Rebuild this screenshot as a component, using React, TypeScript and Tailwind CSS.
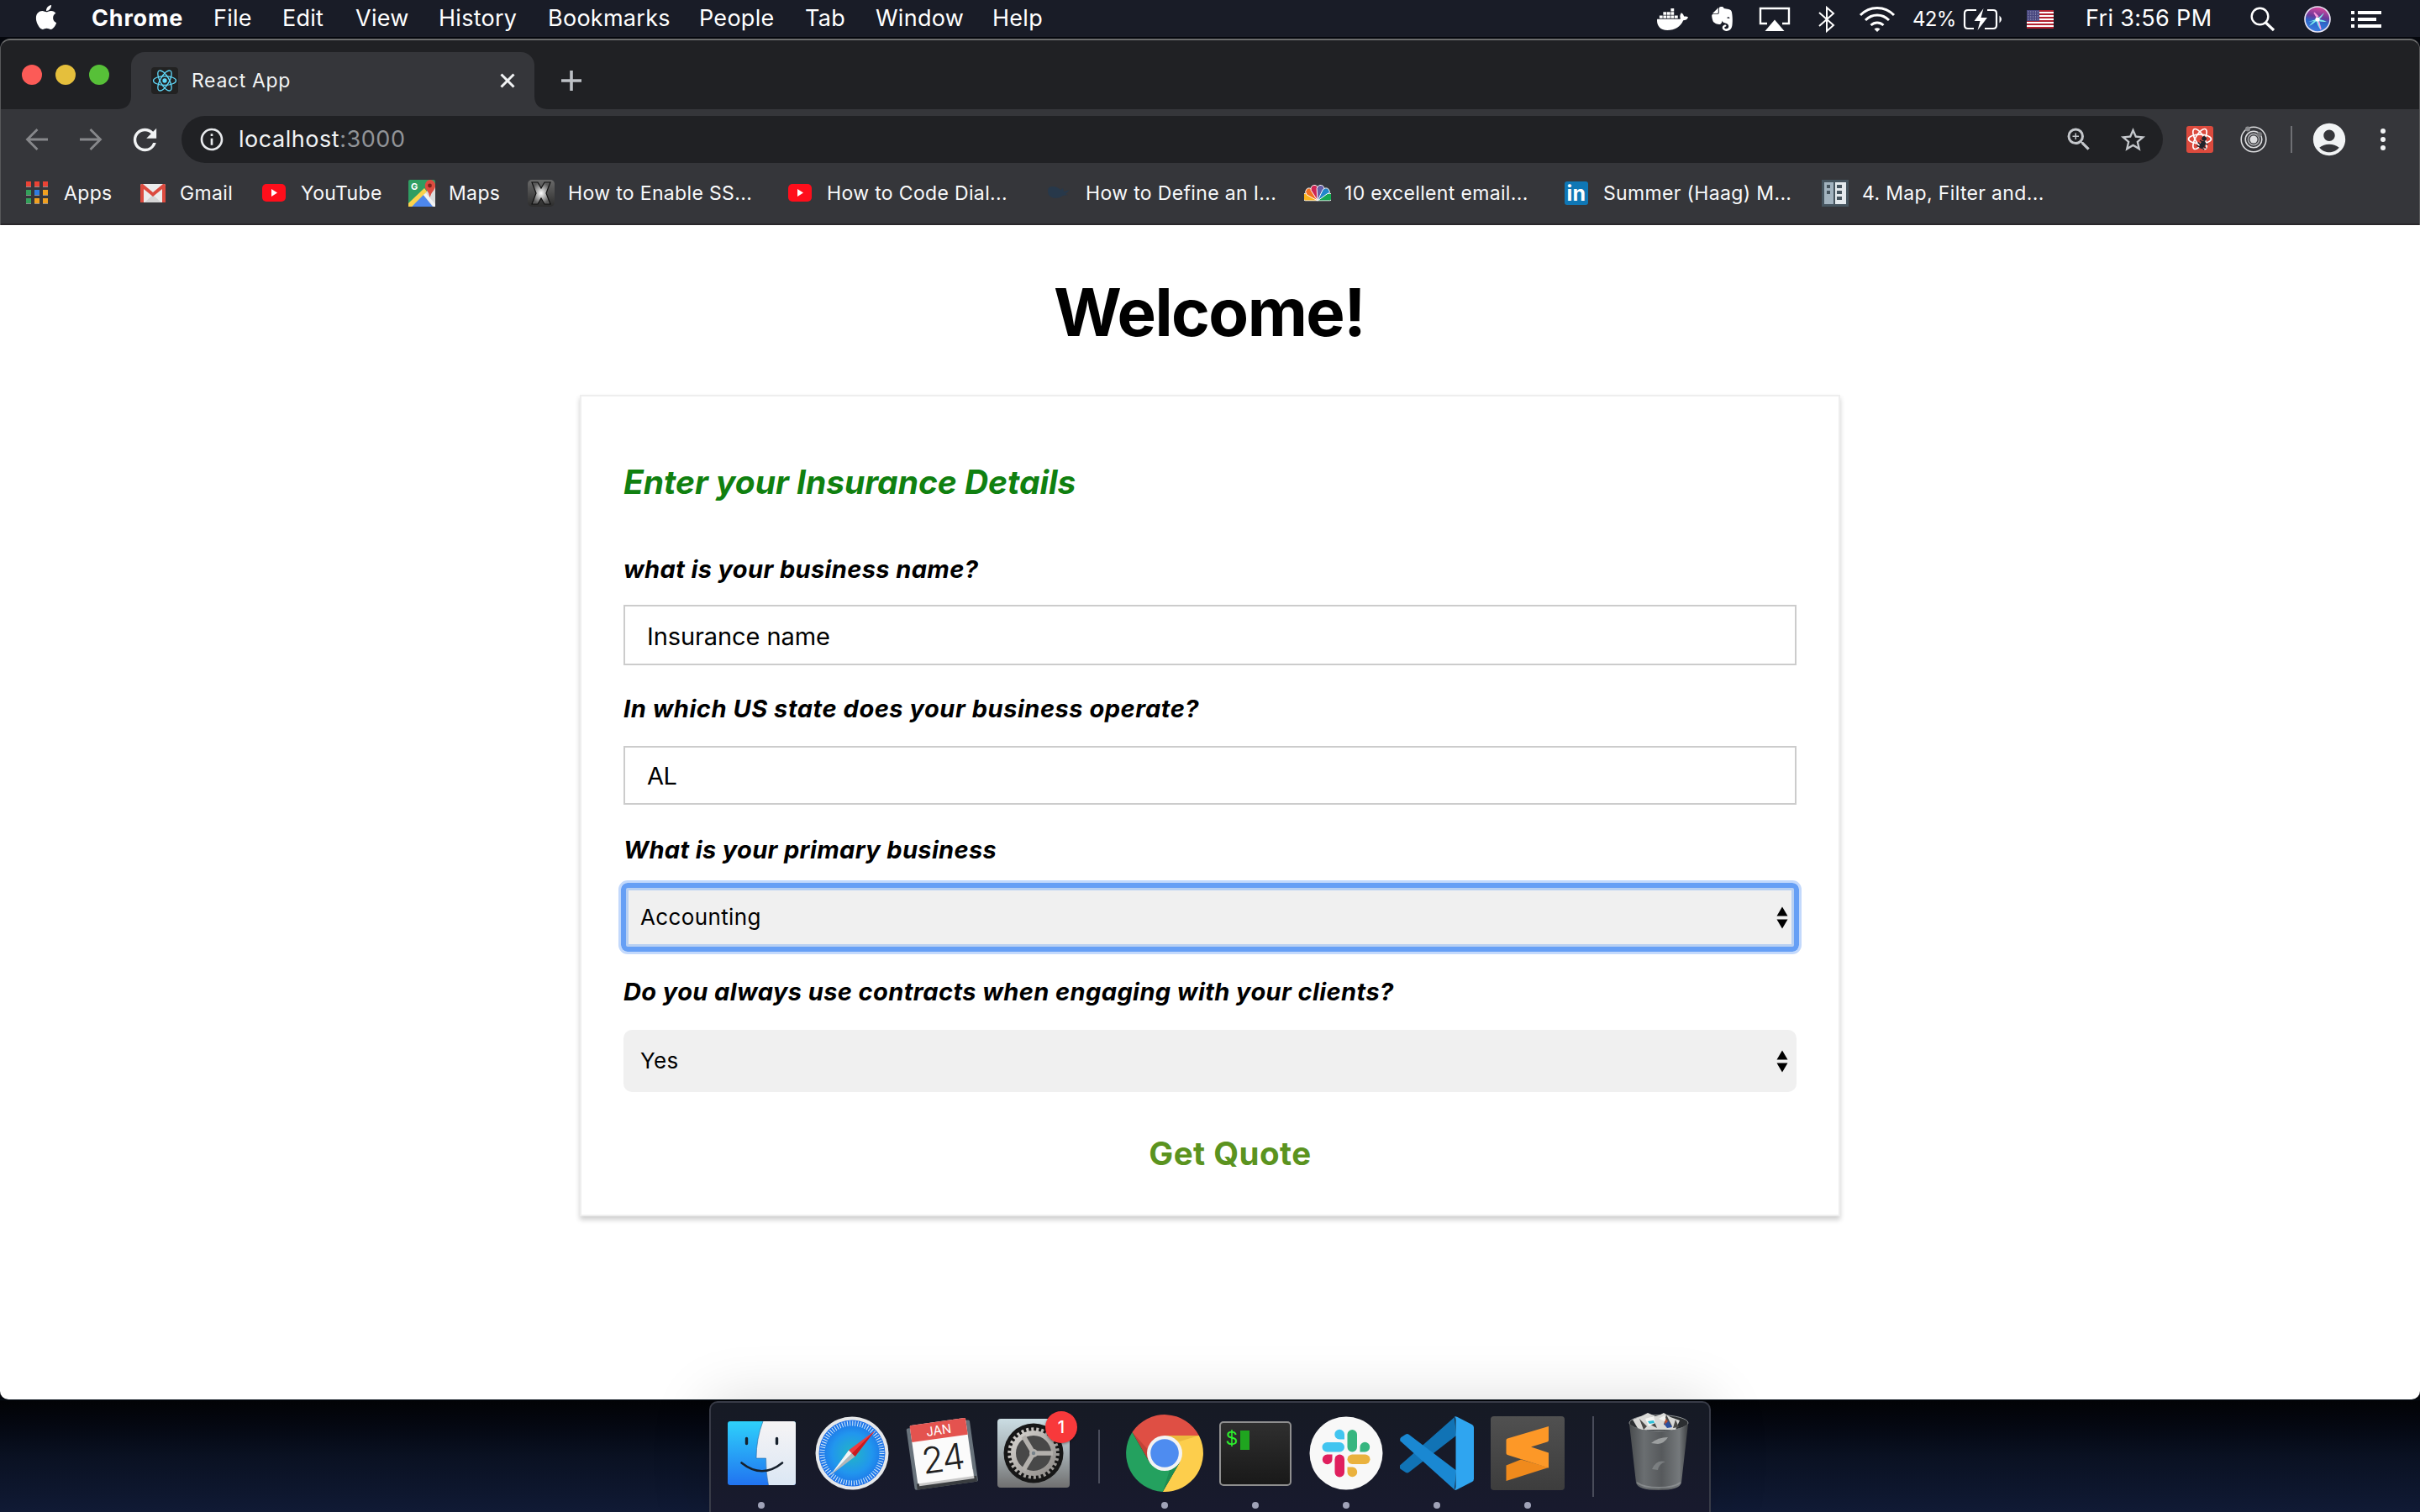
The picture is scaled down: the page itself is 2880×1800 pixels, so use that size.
import React from "react";
import { FaApple, FaDocker, FaEvernote } from "react-icons/fa";
import { MdAccountCircle, MdZoomIn, MdStarBorder, MdRefresh, MdInfoOutline } from "react-icons/md";

/* ---------- menu bar ---------- */

const menuItems = [
  { label: "Chrome", cls: "w-[145px] font-bold tracking-[0.03em]" },
  { label: "File", cls: "w-[82px]" },
  { label: "Edit", cls: "w-[87px]" },
  { label: "View", cls: "w-[99px]" },
  { label: "History", cls: "w-[130px]" },
  { label: "Bookmarks", cls: "w-[180px]" },
  { label: "People", cls: "w-[126px]" },
  { label: "Tab", cls: "w-[84px]" },
  { label: "Window", cls: "w-[139px]" },
  { label: "Help", cls: "w-[70px]" },
];

function StatusIcons() {
  return (
    <div className="flex h-full items-center">
      <FaDocker className="h-[36px] w-[37px]" />
      <FaEvernote className="ml-[24px] h-[33px] w-[33px]" />
      <svg className="ml-[27px] h-[30px] w-[38px]" viewBox="0 0 38 30" fill="none">
        <path d="M10 20H2V2h34v18h-8" stroke="#fff" strokeWidth="2.4" />
        <path d="M19 15.500L30.500 29H7.500z" fill="#fff" />
      </svg>
      <svg className="ml-[33px] h-[32px] w-[20px]" viewBox="0 0 20 32" fill="none" stroke="#fff" strokeWidth="2">
        <path d="M1 8l17 15-8 7V2l8 7L1 24" />
      </svg>
      <svg className="ml-[28px] h-[32px] w-[44px]" viewBox="0 0 44 32" fill="none" stroke="#fff" strokeWidth="3">
        <path d="M2 11C13 -.5 31 -.5 42 11" />
        <path d="M8 17c8-8 20-8 28 0" />
        <path d="M14.500 23c4.500-4 10.500-4 15 0" />
        <path d="M18.500 27.500q3.500-2.500 7 0L22 31z" fill="#fff" stroke="none" />
      </svg>
      <span className="ml-[20px] w-[60px] text-[24px] tracking-[-0.03em]">42%</span>
      <svg className="h-[26px] w-[48px]" viewBox="0 0 48 26" fill="none">
        <path d="M16 2H6Q2 2 2 6v14q0 4 4 4h7M26 24h10q4 0 4-4V6q0-4-4-4h-7" stroke="#fff" strokeWidth="2.2" />
        <path d="M43.500 8.500q5 4.500 0 9z" fill="#fff" />
        <path d="M24.500 0L13.500 15h7l-3 11L29 11h-7.500z" fill="#fff" />
      </svg>
      <svg className="ml-[28px] h-[22px] w-[32px]" viewBox="0 0 32 22">
        <rect width="32" height="22" fill="#fff" />
        {[0, 1, 2, 3, 4, 5].map((i) => (
          <rect key={i} y={i * 4} width="32" height="2" fill="#b22230" />
        ))}
        <rect width="15" height="13" fill="#47467e" />
        {[0, 1, 2, 3].map((r) =>
          [0, 1, 2, 3, 4].map((c) => (
            <rect key={`${r}-${c}`} x={1.5 + c * 2.8} y={1.5 + r * 3} width="1" height="1" fill="#c9c9e0" />
          ))
        )}
      </svg>
      <span className="ml-[38px] w-[196px] text-[27px] tracking-[0.0125em]">Fri 3:56 PM</span>
      <svg className="h-[30px] w-[30px]" viewBox="0 0 30 30" fill="none" stroke="#fff">
        <circle cx="11.500" cy="11.500" r="9.800" strokeWidth="2.400" />
        <path d="M18.500 19L28 28" strokeWidth="3.200" />
      </svg>
      <svg className="ml-[34px] h-[32px] w-[32px]" viewBox="0 0 32 32">
        <defs>
          <linearGradient id="siri" x1="0.600" y1="0" x2="0.400" y2="1">
            <stop offset="0" stopColor="#e0489c" />
            <stop offset="0.400" stopColor="#6b3a9a" />
            <stop offset="0.600" stopColor="#2b66c9" />
            <stop offset="1" stopColor="#3f7ee0" />
          </linearGradient>
        </defs>
        <circle cx="16" cy="16" r="15" fill="url(#siri)" stroke="#e8e4f4" strokeWidth="1.600" />
        <path d="M5 19Q12 17 16 15Q20 12 24 8Q21 14 18 16Q24 17 27 19Q20 19 17 18L20 29Q15 22 15 18Q10 22 6 24Q10 19 12 18z" fill="#7ff0ee" />
        <path d="M16 15L12 8L17 13M17 17l3 11" stroke="#ff9be0" strokeWidth="1.500" />
        <circle cx="16" cy="16" r="2.600" fill="#fff" />
      </svg>
      <svg className="ml-[24px] h-[20px] w-[36px]" viewBox="0 0 36 20" fill="#fff">
        <path d="M0 0h4v4H0zM8 0h28v4H8zM0 8h4v4H0zM8 8h22v4H8zM0 16h4v4H0zM8 16h28v4H8z" />
      </svg>
    </div>
  );
}

function MenuBar() {
  return (
    <header className="flex h-[44px] items-center justify-between bg-[#191c27] pt-px pr-[46px] pl-[41px] text-[27px] text-white">
      <div className="flex h-full items-center tracking-[0.01em]">
        <FaApple className="mt-[-4px] mr-[40px] h-[33px] w-[28px]" />
        {menuItems.map((m) => (
          <span key={m.label} className={m.cls}>
            {m.label}
          </span>
        ))}
      </div>
      <StatusIcons />
    </header>
  );
}

/* ---------- browser chrome ---------- */

function ReactAtom({ className, stroke, width }: { className: string; stroke: string; width: number }) {
  return (
    <svg className={className} viewBox="0 0 32 32" fill="none" stroke={stroke} strokeWidth={width}>
      {[30, 90, 150].map((a) => (
        <ellipse key={a} cx="16" cy="16" rx="13.500" ry="5.300" transform={`rotate(${a - 30} 16 16)`} />
      ))}
      <circle cx="16" cy="16" r="2" fill={stroke} />
    </svg>
  );
}

function TabStrip() {
  return (
    <div className="flex h-[82px] items-end bg-[#202124] pl-[25px]">
      <div className="mb-[29px] flex gap-[16px]">
        <span className="size-[24px] rounded-full bg-[#fc5b57]" />
        <span className="size-[24px] rounded-full bg-[#e5bf3c]" />
        <span className="size-[24px] rounded-full bg-[#57c038]" />
      </div>
      <svg className="ml-[9px] h-[16px] w-[17px]" viewBox="0 0 17 16">
        <path d="M17 0v16H0Q17 16 17 0z" fill="#35363a" />
      </svg>
      <div className="flex h-[68px] w-[480px] items-center rounded-t-[16px] bg-[#35363a] pl-[24px]">
        <span className="size-[32px] rounded-[4px] bg-[#222222]">
          <ReactAtom className="size-[32px]" stroke="#61dafb" width={1.3} />
        </span>
        <span className="ml-[16px] w-[367px] text-[23px] tracking-[0.028em] text-[#f1f3f4]">React App</span>
        <svg className="size-[18px]" viewBox="0 0 18 18" stroke="#f1f3f4" strokeWidth="3">
          <path d="M1.500 1.500l15 15M16.500 1.500l-15 15" />
        </svg>
      </div>
      <svg className="h-[16px] w-[17px]" viewBox="0 0 17 16">
        <path d="M0 0v16h17Q0 16 0 0z" fill="#35363a" />
      </svg>
      <svg className="mb-[22px] ml-[15px] size-[24px]" viewBox="0 0 24 24" stroke="#bdc1c6" strokeWidth="3.600">
        <path d="M12 0v24M0 12h24" />
      </svg>
    </div>
  );
}

function Arrow({ className }: { className: string }) {
  return (
    <svg className={className} viewBox="0 0 28 28" fill="none" stroke="#87888b" strokeWidth="2.800">
      <path d="M27 14H3M14.500 2L2.500 14l12 12" />
    </svg>
  );
}

function Toolbar() {
  return (
    <div className="flex h-[72px] items-center pl-[29px]">
      <Arrow className="h-[28px] w-[28px]" />
      <Arrow className="ml-[36px] h-[28px] w-[28px] rotate-180" />
      <MdRefresh className="ml-[30px] size-[41px] text-[#f1f3f4]" />
      <div className="ml-[23px] flex h-[56px] w-[2358px] items-center rounded-full bg-[#202124] pl-[20px]">
        <MdInfoOutline className="size-[32px] text-[#e8eaed]" />
        <span className="ml-[16px] w-[2172px] text-[27px] tracking-[0.02em] text-[#f1f3f4]">
          localhost<span className="text-[#919498]">:3000</span>
        </span>
        <MdZoomIn className="size-[36px] text-[#c4c7cb]" />
        <MdStarBorder className="ml-[29px] size-[35px] text-[#c4c7cb]" />
      </div>
      <span className="ml-[28px] size-[32px] rounded-[3px] bg-[#dc4a3d]">
        <svg className="size-[32px]" viewBox="0 0 32 32" fill="none" stroke="#fff" strokeWidth="1.700">
          {[0, 60, 120].map((a) => (
            <ellipse key={a} cx="16" cy="15.500" rx="13.500" ry="5.300" transform={`rotate(${a} 16 15.5)`} />
          ))}
          <g transform="rotate(35 20 21)">
            <circle cx="17.500" cy="15.500" r="2.800" fill="#20232a" stroke="none" />
            <ellipse cx="20" cy="22.500" rx="3" ry="5" fill="#20232a" stroke="none" />
            <path d="M14.500 20l11-1M14 23.500h12M15 27l10-1" stroke="#20232a" strokeWidth="1.400" />
          </g>
        </svg>
      </span>
      <svg className="ml-[32px] size-[32px]" viewBox="0 0 32 32" fill="none" stroke="#dcdddf" strokeWidth="1.600">
        <circle cx="16" cy="16" r="14.800" />
        <circle cx="16" cy="16" r="9.800" />
        <circle cx="16" cy="16" r="6.600" stroke="#a9aaad" />
        <circle cx="16" cy="16" r="4.500" fill="#dcdddf" stroke="none" />
        <circle cx="9" cy="3.500" r="3" fill="#8b8c8f" stroke="none" />
        <circle cx="23" cy="10" r="3" fill="#77787b" stroke="none" />
      </svg>
      <span className="ml-[28px] h-[32px] w-[2px] bg-[#6f7074]" />
      <MdAccountCircle className="ml-[21px] size-[46px] text-[#f1f3f4]" />
      <span className="ml-[38px] flex flex-col gap-[4px]">
        <span className="size-[6px] rounded-full bg-[#f1f3f4]" />
        <span className="size-[6px] rounded-full bg-[#f1f3f4]" />
        <span className="size-[6px] rounded-full bg-[#f1f3f4]" />
      </span>
    </div>
  );
}

const appColors = ["#ea4335", "#ea4335", "#ea4335", "#34a05a", "#2f7de1", "#f0a020", "#34a05a", "#f0a020", "#f0a020"];

const AppsIcon = () => (
  <svg className="size-[32px]" viewBox="0 0 32 32">
    {appColors.map((c, i) => (
      <g key={i}>
        <rect x={3 + (i % 3) * 10} y={2 + Math.floor(i / 3) * 10} width="6" height="6" fill={c} />
        <rect x={3 + (i % 3) * 10} y={8 + Math.floor(i / 3) * 10} width="6" height="1" fill="#8d8e91" />
      </g>
    ))}
  </svg>
);

const GmailIcon = () => (
  <svg className="size-[32px]" viewBox="0 0 32 32">
    <rect x="1" y="5" width="30" height="22" rx="2" fill="#ececec" />
    <path d="M6 27L16 18l10 9z" fill="#d5d5d5" />
    <path d="M1 27V7q0-2 2-2h1l12 10L28 5h1q2 0 2 2v20h-4V11L16 20 5 11v16z" fill="#dc4b3f" />
  </svg>
);

const YouTubeIcon = () => (
  <svg className="size-[32px]" viewBox="0 0 32 32">
    <rect x="2" y="5" width="28" height="21" rx="5" fill="#ff0e1b" />
    <path d="M13 11v9l7-4.500z" fill="#fff" />
  </svg>
);

const MapsIcon = () => (
  <svg className="size-[32px]" viewBox="0 0 32 32">
    <rect width="32" height="32" rx="2" fill="#2f9e62" />
    <path d="M32 32V8L16 17 3 32z" fill="#dcdcdc" />
    <path d="M4 32L17 17 29 32z" fill="#4d87ed" />
    <path d="M0 28v4h4L22 14l-3-4z" fill="#fbd34c" />
    <path d="M18 18l3-2 11 13v3h-2z" fill="#f3f3f3" />
    <path d="M25.500 21q-1-6-4-9-3-4-1-8 2-4 5.500-4t5.500 4q1.500 4-1 8-3 3-5 9z" fill="#dc4b3f" />
    <circle cx="25.500" cy="7" r="2.400" fill="#7c231c" />
    <text x="3" y="12" fontFamily="Inter" fontSize="11" fontWeight="700" fill="#fff">G</text>
  </svg>
);

const OsxIcon = () => (
  <svg className="size-[32px]" viewBox="0 0 32 32">
    <defs>
      <linearGradient id="osx" x1="0" y1="0" x2="0" y2="1">
        <stop offset="0" stopColor="#6a6a6a" />
        <stop offset="1" stopColor="#2c2c2c" />
      </linearGradient>
      <radialGradient id="osxGlow">
        <stop offset="0" stopColor="#ffffff" />
        <stop offset="1" stopColor="#5a5a5a" />
      </radialGradient>
    </defs>
    <rect width="32" height="32" rx="5" fill="url(#osx)" />
    <path d="M5 3h7l4 7 4-7h7l-5 13 5 13h-7l-4-7-4 7H5l5-13z" fill="url(#osxGlow)" stroke="#111" strokeWidth="1.200" />
  </svg>
);

const BirdIcon = () => (
  <svg className="size-[32px]" viewBox="0 0 32 32">
    <path d="M3 13q0-5 6-5 5 0 9 4l3-2 1 4 7-2-5 5 3 1-6 1q-4 3-10 3-8-1-8-9z" fill="#27384a" />
  </svg>
);

const nbcColors = ["#f9b31e", "#f26f21", "#cf2553", "#6560a8", "#2186c9", "#15a852"];

const NbcIcon = () => (
  <svg className="size-[32px]" viewBox="0 0 32 32">
    <rect x="3" y="20" width="26" height="5" fill="#fff" />
    {nbcColors.map((c, i) => (
      <path
        key={c}
        d="M16 25L11.500 11Q12 6 16 6t4.500 5z"
        fill={c}
        stroke="#fff"
        strokeWidth="0.900"
        transform={`rotate(${-72 + i * 28.8} 16 25)`}
      />
    ))}
    <rect x="0" y="25.500" width="32" height="7" fill="#35363a" />
  </svg>
);

const LinkedInIcon = () => (
  <span className="flex size-[28px] items-center justify-center rounded-[3px] bg-[#0f77b5] text-[25px] leading-none font-bold text-white">
    in
  </span>
);

const ColumnsIcon = () => (
  <svg className="size-[32px]" viewBox="0 0 32 32">
    <rect width="32" height="32" fill="#46555f" />
    <rect x="3" y="3" width="11" height="26" fill="#a2b3bf" />
    <rect x="16" y="3" width="13" height="26" fill="#e4eaee" />
    <path d="M6 6h4v4H6zM6 13h4v4H6zM18 6h6v4h-6zM18 13h6v4h-6zM18 20h6v4h-6z" fill="#46555f" />
  </svg>
);

const bookmarks = [
  { label: "Apps", icon: <AppsIcon />, cls: "w-[138px]" },
  { label: "Gmail", icon: <GmailIcon />, cls: "w-[144px]" },
  { label: "YouTube", icon: <YouTubeIcon />, cls: "w-[176px]" },
  { label: "Maps", icon: <MapsIcon />, cls: "w-[142px]" },
  { label: "How to Enable SS...", icon: <OsxIcon />, cls: "w-[308px]" },
  { label: "How to Code Dial...", icon: <YouTubeIcon />, cls: "w-[308px]" },
  { label: "How to Define an I...", icon: <BirdIcon />, cls: "w-[308px]" },
  { label: "10 excellent email...", icon: <NbcIcon />, cls: "w-[308px]" },
  { label: "Summer (Haag) M...", icon: <LinkedInIcon />, cls: "w-[308px]" },
  { label: "4. Map, Filter and...", icon: <ColumnsIcon />, cls: "w-[308px]" },
];

function BookmarksBar() {
  return (
    <div className="flex h-[66px] items-center border-b-2 border-[#29272a] pb-[8px] pl-[27px] text-[23px] tracking-[0.015em] text-[#f8f9fa]">
      {bookmarks.map((b) => (
        <div key={b.label} className={`flex shrink-0 items-center whitespace-nowrap ${b.cls}`}>
          <span className="mr-[16px] flex size-[32px] items-center justify-center">{b.icon}</span>
          {b.label}
        </div>
      ))}
    </div>
  );
}

/* ---------- form ---------- */

function Label({ children, className }: { children: React.ReactNode; className: string }) {
  return (
    <label className={`block h-[36px] text-[29px] leading-[36px] font-bold whitespace-nowrap italic ${className}`}>
      {children}
    </label>
  );
}

function SelectBox({ value, focused, className }: { value: string; focused?: boolean; className: string }) {
  return (
    <div className={`relative flex h-[74px] items-center justify-between rounded-[10px] bg-[#f0f0f0] pr-[10px] pl-[20px] ${className}`}>
      <span className="pb-[2px] text-[26px] tracking-[0.014em]">{value}</span>
      <svg className="h-[27px] w-[14px]" viewBox="0 0 14 27">
        <path d="M7 .5l6.500 11H.5zM7 26.500l6.500-11H.5z" fill="#000" />
      </svg>
      {focused && (
        <span className="absolute -inset-x-[6px] -inset-y-[7px] rounded-[11px] border-3 border-[#c3d9fc] shadow-[inset_0_0_0_6px_#669ff5,inset_0_0_0_9px_#b8d0f2]" />
      )}
    </div>
  );
}

function Page() {
  return (
    <main className="flex h-[1398px] flex-col items-center rounded-b-[10px] bg-white pt-[57px] text-black">
      <h1 className="h-[94px] pr-[2px] text-[78px] leading-[94px] font-bold tracking-[-0.02em]">Welcome!</h1>
      <section className="mt-[51px] h-[978px] w-[1500px] border-2 border-[#eeeeee] bg-white px-[50px] pt-[78px] shadow-[0_4px_6px_rgba(0,0,0,0.2)]">
        <h2 className="h-[48px] text-[39px] leading-[48px] font-bold tracking-[-0.001em] text-[#108010] italic">
          Enter your Insurance Details
        </h2>
        <Label className="mt-[62px] tracking-[0.013em]">what is your business name?</Label>
        <div className="mt-[24px] flex h-[72px] items-center border-2 border-[#cccccc] pt-[3px] pl-[26px] text-[29px] tracking-[-0.003em]">
          Insurance name
        </div>
        <Label className="mt-[34px] tracking-[0.0185em]">In which US state does your business operate?</Label>
        <div className="mt-[26px] flex h-[70px] items-center border-2 border-[#cccccc] pt-[1px] pl-[26px] text-[29px] tracking-[-0.02em]">
          AL
        </div>
        <Label className="mt-[36px] tracking-[0.012em]">What is your primary business</Label>
        <SelectBox value="Accounting" focused className="mt-[25px]" />
        <Label className="mt-[34px] tracking-[0.014em]">Do you always use contracts when engaging with your clients?</Label>
        <SelectBox value="Yes" className="mt-[27px]" />
        <div className="mt-[50px] flex h-[48px] items-center justify-center pl-[48px] text-[38.5px] font-bold tracking-[0.012em] text-[#5b931f]">
          Get Quote
        </div>
      </section>
    </main>
  );
}

/* ---------- dock ---------- */

const FinderIcon = () => (
  <svg className="h-[76px] w-[81px]" viewBox="0 0 81 76">
    <defs>
      <linearGradient id="fBlue" x1="0" y1="0" x2="0" y2="1">
        <stop offset="0" stopColor="#2ed1fb" />
        <stop offset="1" stopColor="#2173f0" />
      </linearGradient>
      <linearGradient id="fWhite" x1="0" y1="0" x2="0" y2="1">
        <stop offset="0" stopColor="#f6f4f5" />
        <stop offset="1" stopColor="#dbe7f4" />
      </linearGradient>
    </defs>
    <rect width="81" height="76" rx="3" fill="url(#fBlue)" />
    <path d="M42 0Q34 21 34 44h11.500q0 18 3 32H78q3 0 3-3V3q0-3-3-3z" fill="url(#fWhite)" />
    <path d="M42 0Q34 21 34 44h11.500q0 18 3 32" fill="none" stroke="#1b5f9a" strokeOpacity="0.700" strokeWidth="0.800" />
    <path d="M22.500 20.500v6M58.500 20.500v6" stroke="#16202c" strokeWidth="3.400" strokeLinecap="round" />
    <path d="M16.500 49.500Q41 69 65 49.500" fill="none" stroke="#16202c" strokeWidth="2.600" strokeLinecap="round" />
  </svg>
);

const SafariIcon = () => (
  <svg className="size-[88px]" viewBox="0 0 88 88">
    <defs>
      <radialGradient id="saf">
        <stop offset="0" stopColor="#22b6c4" />
        <stop offset="0.600" stopColor="#2196ee" />
        <stop offset="1" stopColor="#1d6fe8" />
      </radialGradient>
    </defs>
    <circle cx="44" cy="44" r="43.500" fill="#e6e8ea" />
    <circle cx="44" cy="44" r="39.500" fill="url(#saf)" />
    <circle cx="44" cy="44" r="35.500" fill="none" stroke="#d8ecfb" strokeWidth="6" strokeDasharray="1 2.098" />
    <path d="M71 17.500L40 40.500l7.500 7.500z" fill="#ee3a3f" />
    <path d="M71 17.500L47.500 48l-3.700-3.700z" fill="#c81a20" />
    <path d="M18 70.500L40 40.500l3.800 3.800z" fill="#f4f4f4" />
    <path d="M18 70.500L43.800 44.300l3.700 3.700z" fill="#b4b6b8" />
  </svg>
);

const CalendarIcon = () => (
  <svg className="size-[88px]" viewBox="0 0 88 88">
    <g transform="rotate(-8 44 44)">
      <rect x="5" y="9" width="76" height="74" rx="2" fill="#68727b" />
      <rect x="8" y="76" width="72" height="7" fill="#3a3d40" />
      <rect x="11" y="68" width="66" height="11" fill="#c9c9c9" />
      <rect x="9.500" y="6" width="67" height="70" rx="1.500" fill="#fbfbfb" />
      <path d="M9.500 26V7.500Q9.500 6 11 6h64q1.500 0 1.500 1.500V26z" fill="#e4534f" />
      <text x="43" y="21.500" textAnchor="middle" fontFamily="Inter" fontSize="15" fill="#fff">JAN</text>
      <text x="43" y="65.500" textAnchor="middle" fontFamily="Inter" fontSize="43" fontWeight="300" letterSpacing="-1.500" fill="#222">24</text>
    </g>
  </svg>
);

const PreferencesIcon = () => (
  <div className="relative">
    <svg className="size-[88px]" viewBox="0 0 88 88">
      <defs>
        <linearGradient id="pref" x1="0" y1="0" x2="0" y2="1">
          <stop offset="0" stopColor="#cbdde3" />
          <stop offset="0.500" stopColor="#a4aeb2" />
          <stop offset="1" stopColor="#707070" />
        </linearGradient>
        <linearGradient id="gear" x1="0" y1="0" x2="1" y2="1">
          <stop offset="0" stopColor="#d6d3cf" />
          <stop offset="1" stopColor="#8e8b88" />
        </linearGradient>
      </defs>
      <rect x="1" y="3" width="86" height="82" rx="4" fill="url(#pref)" />
      <circle cx="44" cy="44" r="35.500" fill="#161616" />
      <circle cx="44" cy="44" r="28.500" fill="none" stroke="url(#gear)" strokeWidth="4.500" strokeDasharray="3 2.970" />
      <circle cx="44" cy="44" r="24" fill="#484848" stroke="url(#gear)" strokeWidth="6" />
      <path d="M44 44h23M44 44L32 24M44 44L32 64" stroke="#b3b0ac" strokeWidth="5.500" />
      <circle cx="44" cy="44" r="5" fill="#b3b0ac" />
      <circle cx="44" cy="44" r="2.200" fill="#77828a" />
    </svg>
    <span className="absolute top-[-6px] right-[-8px] flex size-[38px] items-center justify-center rounded-full bg-[#f8393b] text-[20px] font-medium text-white shadow-[0_1px_3px_rgba(0,0,0,0.4)]">
      1
    </span>
  </div>
);

const ChromeIcon = () => (
  <svg className="size-[92px]" viewBox="0 0 92 92">
    <path d="M7.400 21.100A46 46 0 0 1 86.900 25H46L27.800 56.500z" fill="#df4f44" />
    <path d="M86.900 25A46 46 0 0 1 43.700 91.900L64.200 56.500 46 25z" fill="#fdce4c" />
    <path d="M43.700 91.900A46 46 0 0 1 7.400 21.100L27.800 56.500h36.400z" fill="#24a15f" />
    <path d="M86.500 25H46l18 7z" fill="#c78a1b" fillOpacity="0.300" />
    <path d="M7.400 21.100L27.800 56.500l-1-14z" fill="#8f2a20" fillOpacity="0.350" />
    <path d="M43.700 91.900L64.200 56.500l-12 9z" fill="#0f6a3b" fillOpacity="0.350" />
    <circle cx="46" cy="46" r="21" fill="#f3f3f3" />
    <circle cx="46" cy="46" r="16.800" fill="#4e8cf0" />
  </svg>
);

const TerminalIcon = () => (
  <div className="flex h-[77px] w-[86px] items-start gap-[3px] rounded-[5px] border-2 border-[#8f8f8f] bg-linear-to-b from-[#2f2f2f] to-[#191919] pt-[8px] pl-[6px] font-['Liberation_Mono'] text-[23px] leading-[24px] text-[#2cf02c]">
    $<span className="mt-[1px] h-[23px] w-[11px] bg-[#1fa51f]" />
  </div>
);

const SlackIcon = () => (
  <svg className="size-[88px]" viewBox="0 0 88 88">
    <circle cx="44" cy="44" r="43.500" fill="#f8f8f8" />
    <g fill="#42c5f0">
      <path d="M42 27.500h-6a5.850 5.850 0 1 1 6-6z" />
      <rect x="15.500" y="31" width="26.500" height="11.500" rx="5.750" />
    </g>
    <g fill="#37b680">
      <rect x="45.500" y="16" width="11.500" height="26.500" rx="5.750" />
      <path d="M60.500 42.500v-6a5.850 5.850 0 1 1 6 6z" />
    </g>
    <g fill="#e01f5e">
      <path d="M27.500 45.500v6a5.850 5.850 0 1 1-6-6z" />
      <rect x="30.500" y="45.500" width="11.500" height="27" rx="5.750" />
    </g>
    <g fill="#eab23e">
      <rect x="45.500" y="45.500" width="27" height="11.500" rx="5.750" />
      <path d="M45.500 60.500h6a5.850 5.850 0 1 1-6 6z" />
    </g>
  </svg>
);

const VsCodeIcon = () => (
  <svg className="size-[88px]" viewBox="0 0 88 88">
    <path d="M65 1L0 58.500q-1 3 1 4.500l6 4q2 1 4-.5L67 23z" fill="#1173b5" />
    <path d="M65 87.500L.5 29.500q-1-3 1-4.500l5.500-3.500q2-1 4 .5L67 64.500z" fill="#1a88d2" />
    <path d="M65 .5q1-.6 3 .3L86 10q2 1.200 2 3.500v61q0 2.300-2 3.500L68 87.200q-2 .9-3 .3 1.500-1 1.500-4v-79Q66.500 1.500 65 .5z" fill="#2fa5f0" />
  </svg>
);

const SublimeIcon = () => (
  <svg className="size-[88px]" viewBox="0 0 88 88">
    <defs>
      <linearGradient id="subl" x1="0" y1="0" x2="0" y2="1">
        <stop offset="0" stopColor="#505050" />
        <stop offset="1" stopColor="#3d3d3d" />
      </linearGradient>
    </defs>
    <rect width="88" height="88" rx="4" fill="url(#subl)" />
    <path d="M36 51.500L18.500 58.500v18.500L69 61z" fill="#f08a1c" />
    <path d="M69 12L20 26.500q-1.500.5-1.500 2V44q0 1.500 1.500 2l49 15.500V43.500L48 36.500l19.500-6q1.500-.5 1.500-2z" fill="#fd9827" />
  </svg>
);

const TrashIcon = () => (
  <svg className="mb-[4px] h-[94px] w-[76px]" viewBox="0 0 76 94">
    <defs>
      <linearGradient id="bin" x1="0" y1="0" x2="1" y2="0">
        <stop offset="0" stopColor="#4b4e50" />
        <stop offset="0.250" stopColor="#6f7375" />
        <stop offset="0.550" stopColor="#5a5d5f" />
        <stop offset="0.850" stopColor="#7a7e80" />
        <stop offset="1" stopColor="#3e4143" />
      </linearGradient>
    </defs>
    <ellipse cx="38" cy="13" rx="35" ry="9.500" fill="#2b2e31" stroke="#8e9294" strokeWidth="1" />
    <path d="M7 9l10-4 8-4 9 4 4-1 6-3 8 5 11 4-5 11H14z" fill="#d9d9d7" />
    <path d="M15 8l9 9-4 4zM30 5l6 14-8-4zM47 3l7 14-10-2zM58 9l4 9-7 1z" fill="#4b4a48" />
    <path d="M22 8l10-3 2 8-8 4zM38 8l7-4 3 8z" fill="#f4f4f2" />
    <path d="M25 11l7-1 1 3-6 1z" fill="#2cbfd8" />
    <path d="M44 14l5-4 5 8-6 1z" fill="#2b4e9e" />
    <path d="M46 8l3 3-4 4z" fill="#c2502f" />
    <path d="M3 14q12 9 35 9t35-9l-8 70q-2 9-27 9t-27-9z" fill="url(#bin)" fillOpacity="0.950" />
    <path d="M29 37q8-7 20-7-4 7-12 8z" fill="#b8babb" fillOpacity="0.700" />
    <path d="M30 68q5-12 16-9-8 3-9 10z" fill="#9a9d9f" fillOpacity="0.500" />
    <path d="M12 84q8 6 26 6t26-6" fill="none" stroke="#a6a9ab" strokeOpacity="0.500" strokeWidth="2" />
  </svg>
);

function DockItem({ children, running }: { children: React.ReactNode; running?: boolean }) {
  return (
    <div className="flex w-[108px] flex-col items-center">
      <div className="mt-[12px] flex h-[96px] items-center">{children}</div>
      {running && <span className="mt-[10px] size-[8px] rounded-full bg-[#a0a3b8]" />}
    </div>
  );
}

function Dock() {
  return (
    <div className="z-10 mt-px flex h-[136px] w-[1192px] rounded-t-[10px] border-2 border-b-0 border-[#383b47] bg-linear-to-b from-[#161a24] to-[#181a2e] px-[6px] shadow-[0_0_70px_rgba(0,0,0,0.15)]">
      <DockItem running><FinderIcon /></DockItem>
      <DockItem><SafariIcon /></DockItem>
      <DockItem><CalendarIcon /></DockItem>
      <DockItem><PreferencesIcon /></DockItem>
      <div className="flex w-[48px] justify-center">
        <span className="mt-[32px] h-[64px] w-[2px] bg-[#494c5a]" />
      </div>
      <DockItem running><ChromeIcon /></DockItem>
      <DockItem running><TerminalIcon /></DockItem>
      <DockItem running><SlackIcon /></DockItem>
      <DockItem running><VsCodeIcon /></DockItem>
      <DockItem running><SublimeIcon /></DockItem>
      <div className="flex w-[48px] justify-center">
        <span className="mt-[16px] h-[96px] w-[2px] bg-[#494c5a]" />
      </div>
      <DockItem><TrashIcon /></DockItem>
    </div>
  );
}

export default function App() {
  return (
    <div className="flex h-[1800px] w-[2880px] flex-col overflow-hidden bg-[#05070d] font-['Inter',sans-serif]">
      <MenuBar />
      <div className="mt-[2px] flex h-[1620px] shrink-0 flex-col rounded-[10px]">
        <div className="overflow-hidden rounded-t-[12px] border-x border-t-2 border-x-[#57585a] border-t-[#6b6c6c] bg-[#35363a]">
          <TabStrip />
          <Toolbar />
          <BookmarksBar />
        </div>
        <Page />
      </div>
      <div className="flex h-[134px] shrink-0 justify-center border-t border-[#061019] bg-linear-to-b from-[#020306] via-[#0a1122] via-50% to-[#101a35]">
        <Dock />
      </div>
    </div>
  );
}
